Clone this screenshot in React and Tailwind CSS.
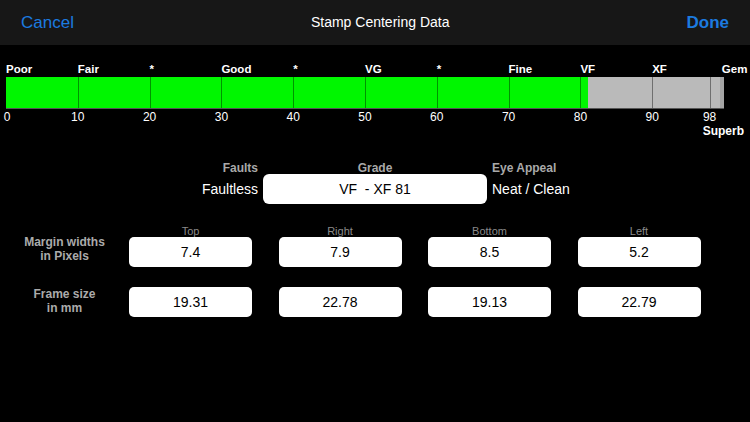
import React from "react";

// Grade scale: 0 to 100 mapped across the bar, ticks every 10 plus 98.
const SCALE_WIDTH = 718;
const pos = (v) => (v / 100) * SCALE_WIDTH;

const topLabels = [
  { v: 0, text: "Poor" },
  { v: 10, text: "Fair" },
  { v: 20, text: "*" },
  { v: 30, text: "Good" },
  { v: 40, text: "*" },
  { v: 50, text: "VG" },
  { v: 60, text: "*" },
  { v: 70, text: "Fine" },
  { v: 80, text: "VF" },
  { v: 90, text: "XF" },
  { v: 99.7, text: "Gem" },
];

const ticks = [10, 20, 30, 40, 50, 60, 70, 80, 90, 98];
const numbers = [0, 10, 20, 30, 40, 50, 60, 70, 80, 90, 98];

const grade = 81;

const margins = [
  { side: "Top", px: "7.4", mm: "19.31" },
  { side: "Right", px: "7.9", mm: "22.78" },
  { side: "Bottom", px: "8.5", mm: "19.13" },
  { side: "Left", px: "5.2", mm: "22.79" },
];

function ValueBox({ children }) {
  return (
    <div className="w-[123px] h-[30px] rounded-[5px] bg-white flex items-center justify-center text-[14px] text-black">
      {children}
    </div>
  );
}

export default function App() {
  return (
    <div
      className="w-[750px] h-[422px] bg-black text-white overflow-hidden"
      style={{ fontFamily: '"Liberation Sans", Arial, sans-serif' }}
    >
      {/* Nav bar */}
      <div className="h-[45px] bg-[#171717] flex items-center justify-between px-[21px]">
        <span className="text-[17px] text-[#1c7be0]">Cancel</span>
        <span className="text-[14px] text-white">Stamp Centering Data</span>
        <span className="text-[17px] font-bold text-[#1c7be0]">Done</span>
      </div>

      {/* Grade scale */}
      <div className="pt-[17px] pl-[6px]">
        <div className="relative w-[718px] h-[14px]">
          {topLabels.map((l) => (
            <span
              key={l.v + l.text}
              className="absolute top-0 text-[11.5px] leading-[14px] font-bold whitespace-nowrap"
              style={{ left: pos(l.v) }}
            >
              {l.text}
            </span>
          ))}
        </div>
        <div className="relative mt-[1px] w-[718px] h-[32px] bg-[#bababa] border-b border-[#555]">
          <div className="absolute left-0 top-0 bottom-0 bg-[#00f600]" style={{ width: pos(grade) }} />
          <div className="absolute right-0 top-0 bottom-0 w-[4px] bg-[#a4a4a4]" />
          {ticks.map((t) => (
            <div
              key={t}
              className="absolute top-0 bottom-0 w-[1px] bg-[#000]/40"
              style={{ left: pos(t) }}
            />
          ))}
        </div>
        <div className="relative mt-[1px] w-[718px] h-[14px]">
          {numbers.map((n) => (
            <span
              key={n}
              className="absolute top-0 -translate-x-1/2 text-[12px] leading-[14px]"
              style={{ left: Math.max(pos(n), 1) }}
            >
              {n}
            </span>
          ))}
        </div>
        <div className="h-[14px] flex justify-end w-[738px]">
          <span className="text-[12px] leading-[14px] font-bold">Superb</span>
        </div>
      </div>

      {/* Faults / Grade / Eye appeal */}
      <div className="mt-[25px] grid grid-cols-[1fr_224px_1fr] gap-x-[5px]">
        <div className="text-right text-[12px] leading-[11px] font-bold text-[#a9a9a9]">Faults</div>
        <div className="text-center text-[12px] leading-[11px] font-bold text-[#a9a9a9]">Grade</div>
        <div className="text-left text-[12px] leading-[11px] font-bold text-[#a9a9a9]">Eye Appeal</div>
        <div className="h-[30px] flex items-center justify-end text-[14px]">Faultless</div>
        <div className="h-[30px] rounded-[6px] bg-white flex items-center justify-center text-[14px] text-black whitespace-pre">
          VF  - XF 81
        </div>
        <div className="h-[30px] flex items-center text-[14px]">Neat / Clean</div>
      </div>

      {/* Margin widths */}
      <div className="mt-[21px] flex items-end">
        <div className="w-[129px] mb-[4px] text-center text-[12px] leading-[14px] font-bold text-[#ababab]">
          Margin widths
          <br />
          in Pixels
        </div>
        <div className="flex gap-x-[26.5px]">
          {margins.map((m) => (
            <div key={m.side} className="flex flex-col items-center">
              <span className="text-[11px] leading-[12px] text-[#8a8a8a]">{m.side}</span>
              <ValueBox>{m.px}</ValueBox>
            </div>
          ))}
        </div>
      </div>

      {/* Frame size */}
      <div className="mt-[20px] flex items-center">
        <div className="w-[129px] -mt-[2px] text-center text-[12px] leading-[14px] font-bold text-[#ababab]">
          Frame size
          <br />
          in mm
        </div>
        <div className="flex gap-x-[26.5px]">
          {margins.map((m) => (
            <ValueBox key={m.side}>{m.mm}</ValueBox>
          ))}
        </div>
      </div>
    </div>
  );
}
